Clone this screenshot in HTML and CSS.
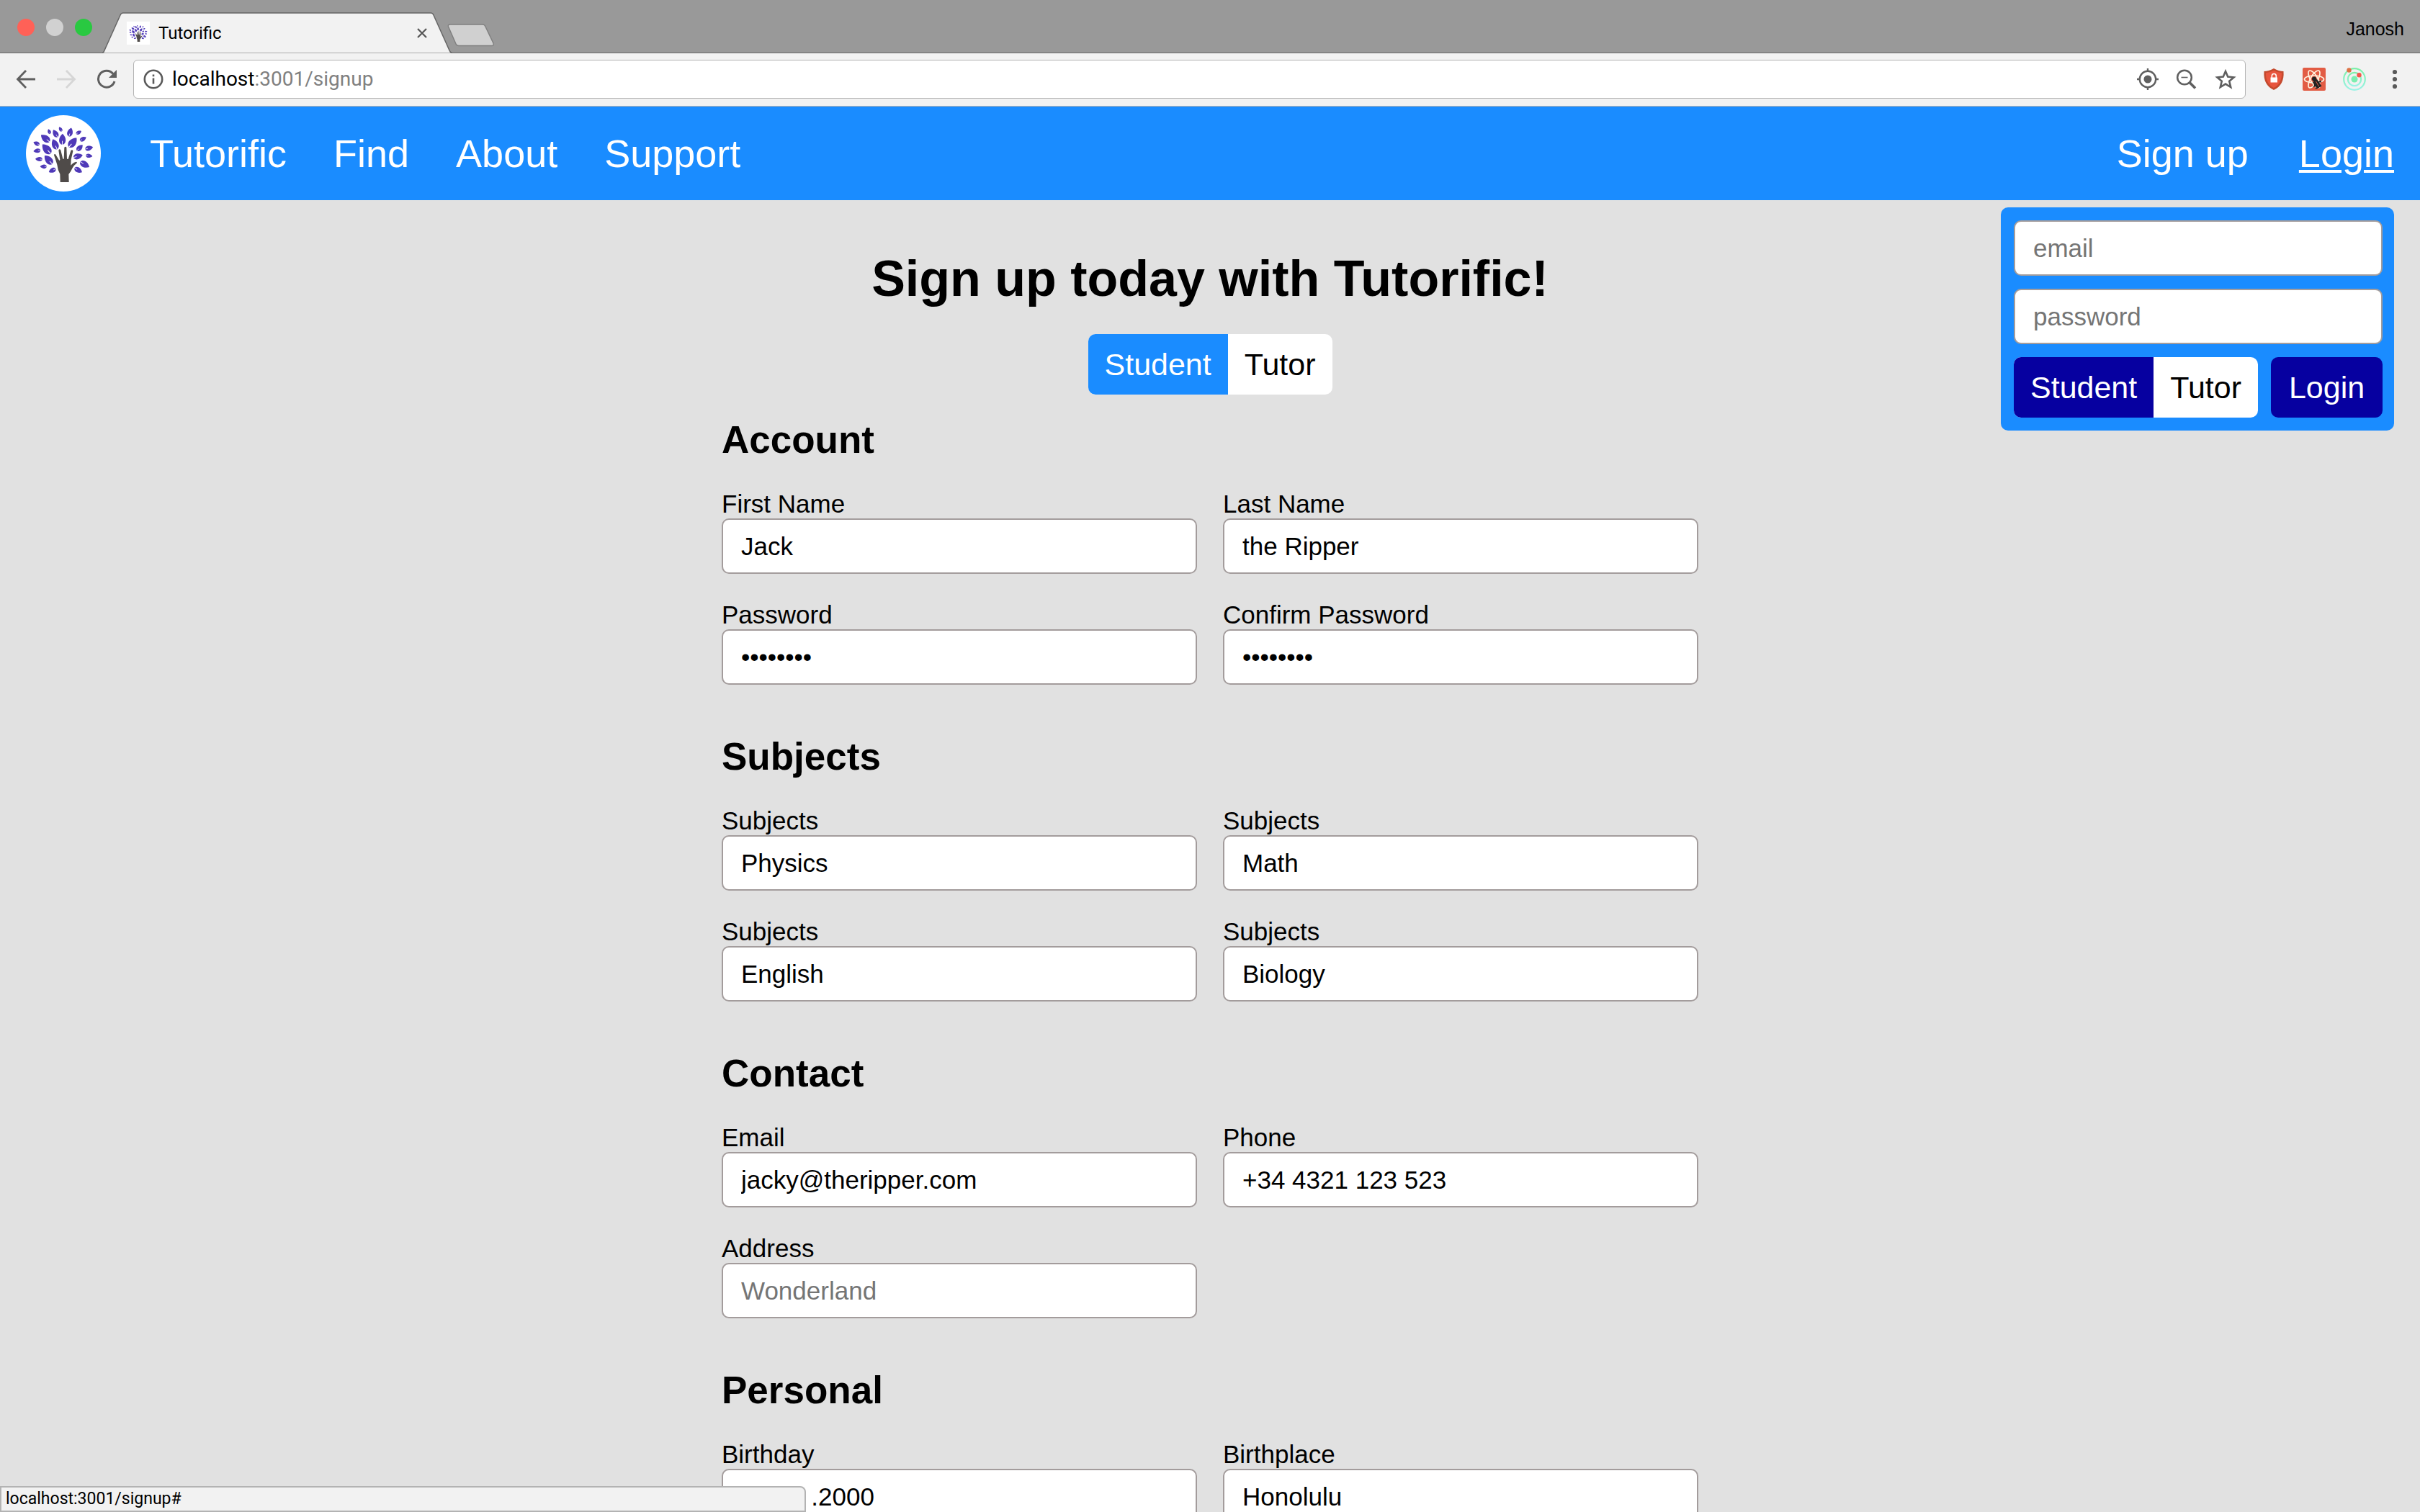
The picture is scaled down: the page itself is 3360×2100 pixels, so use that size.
FILE: index.html
```html
<!DOCTYPE html>
<html lang="en">
<head>
<meta charset="utf-8">
<title>Tutorific</title>
<link rel="stylesheet" href="styles.css">
</head>
<body>
<svg class="defs" aria-hidden="true">
  <defs>
    <g id="leaf">
      <path d="M-10 0C-8-8 3-8 10 0C3 8-8 8-10 0z" fill="#4f39b8"/>
      <path d="M-10 0L-3 0" stroke="#fff" stroke-width="1.2"/>
    </g>
    <symbol id="tree" viewBox="49 30 310 318">
      <use href="#leaf" transform="translate(192 88) rotate(240) scale(1.1)"/>
      <use href="#leaf" transform="translate(145 98) rotate(250) scale(1.1)"/>
      <use href="#leaf" transform="translate(171 106) rotate(240) scale(1.8)"/>
      <use href="#leaf" transform="translate(232 101) rotate(-75) scale(1.9)"/>
      <use href="#leaf" transform="translate(268 102) rotate(-30) scale(1.25)"/>
      <use href="#leaf" transform="translate(129 127) rotate(218) scale(2.3)"/>
      <use href="#leaf" transform="translate(200 130) rotate(-88) scale(2.3)"/>
      <use href="#leaf" transform="translate(169 151) rotate(248) scale(2.3)"/>
      <use href="#leaf" transform="translate(243 144) rotate(-50) scale(2.5)"/>
      <use href="#leaf" transform="translate(286 129) rotate(-30) scale(1.5)"/>
      <use href="#leaf" transform="translate(92 148) rotate(205) scale(1.4)"/>
      <use href="#leaf" transform="translate(134 171) rotate(228) scale(2.6)"/>
      <use href="#leaf" transform="translate(272 166) rotate(-45) scale(1.7)"/>
      <use href="#leaf" transform="translate(311 167) rotate(-15) scale(1.7)"/>
      <use href="#leaf" transform="translate(94 178) rotate(172) scale(1.5)"/>
      <use href="#leaf" transform="translate(142 216) rotate(228) scale(2.4)"/>
      <use href="#leaf" transform="translate(265 201) rotate(-15) scale(2)"/>
      <use href="#leaf" transform="translate(311 199) rotate(8) scale(1.4)"/>
      <use href="#leaf" transform="translate(102 213) rotate(183) scale(1.5)"/>
      <use href="#leaf" transform="translate(293 235) rotate(30) scale(2.2)"/>
      <use href="#leaf" transform="translate(121 244) rotate(180) scale(1.4)"/>
      <use href="#leaf" transform="translate(158 260) rotate(155) scale(1.6)"/>
      <use href="#leaf" transform="translate(266 259) rotate(30) scale(1.8)"/>
      <path fill="#4f4b49" d="M191 309L190 275Q180 258 178 236L165 196Q166 190 171 193L187 219L190 216L184 176Q188 168 193 176L202 212L206 212L208 164Q213 158 217 164L219 212L224 213L235 178Q241 171 244 179L236 215L235 239Q246 226 258 224Q264 227 259 230Q248 238 242 250Q234 268 226 276L227 309z"/>
    </symbol>
  </defs>
</svg>

<header class="browser">
  <div class="tabstrip">
    <div class="lights"><span class="light red"></span><span class="light gray"></span><span class="light green"></span></div>
    <div class="tab">
      <svg class="tab-shape" viewBox="0 0 486 57" aria-hidden="true"><path d="M0 56.500Q2 56 3 53L25 4Q26 1 29 1H456Q459 1 460 4L482 53Q483 56 486 56.500" fill="#f2f2f2" stroke="#666" stroke-width="1.500"/></svg>
      <svg class="favicon" aria-hidden="true"><use href="#tree"/></svg>
      <span class="tab-title">Tutorific</span>
      <button class="tab-close" aria-label="Close tab"><svg width="14" height="14" viewBox="0 0 14 14"><path d="M1 1L13 13M13 1L1 13" stroke="#555" stroke-width="2.200"/></svg></button>
    </div>
    <button class="new-tab" aria-label="New tab"><svg width="66" height="32" viewBox="0 0 66 32"><path d="M4 1H49Q52 1 53 4L64 27Q65 30.500 62 30.500H16Q13 30.500 12 28L1.500 4Q0.500 1 4 1z" fill="#d0d0d0" stroke="#808080" stroke-width="1.500"/></svg></button>
    <span class="profile">Janosh</span>
  </div>
  <div class="toolbar">
    <div class="history">
      <button aria-label="Back"><svg width="28" height="28" viewBox="0 0 28 28"><path d="M14 2L2.500 14L14 26M3 14H27" fill="none" stroke="#5f5f5f" stroke-width="2.800"/></svg></button>
      <button aria-label="Forward"><svg width="28" height="28" viewBox="0 0 28 28"><path d="M14 2L25.500 14L14 26M25 14H1" fill="none" stroke="#d6d6d6" stroke-width="2.800"/></svg></button>
      <button aria-label="Reload"><svg width="28" height="28" viewBox="0 0 28 28"><path d="M25 17A11.500 11.500 0 1 1 23 6.500" fill="none" stroke="#5f5f5f" stroke-width="3"/><path d="M28 1V12H17z" fill="#5f5f5f"/></svg></button>
    </div>
    <div class="omnibox">
      <svg width="28" height="28" viewBox="0 0 28 28" aria-hidden="true"><circle cx="14" cy="14" r="12.200" fill="none" stroke="#5a5a5a" stroke-width="2.600"/><path d="M14 12.500V20.500M14 7.500V10.300" stroke="#5a5a5a" stroke-width="2.600"/></svg>
      <span class="url"><b>localhost</b>:3001/signup</span>
      <div class="omni-icons">
        <svg width="32" height="32" viewBox="0 0 32 32" aria-hidden="true"><g stroke="#5f5f5f" stroke-width="2.400" fill="none"><circle cx="16" cy="16" r="11.200"/><path d="M16 1V6M16 26V31M1 16H6M26 16H31"/></g><circle cx="16" cy="16" r="5.500" fill="#5f5f5f"/></svg>
        <svg width="32" height="32" viewBox="0 0 32 32" aria-hidden="true"><g stroke="#5f5f5f" fill="none"><circle cx="13" cy="13.500" r="9.800" stroke-width="2.500"/><path d="M8.500 13.500H17.500" stroke-width="1.600"/><path d="M20 20.500L28 28.500" stroke-width="3.600"/></g></svg>
        <svg width="32" height="32" viewBox="0 0 32 32" aria-hidden="true"><path d="M16 5L19.200 12.600L27.500 13.400L21.200 18.800L23.200 27L16 22.600L8.800 27L10.800 18.800L4.500 13.400L12.800 12.600z" fill="none" stroke="#5f5f5f" stroke-width="2.600"/></svg>
      </div>
    </div>
    <div class="extensions">
      <svg width="32" height="32" viewBox="0 0 32 32" aria-hidden="true"><path d="M16 1Q23 5 29.500 5Q31 24 16 31Q1 24 2.500 5Q9 5 16 1z" fill="#c44a2e"/><path d="M16 4Q22 7 27 7.200Q27.500 22 16 28Q4.500 22 5 7.200Q10 7 16 4z" fill="#e8553e"/><rect x="11.500" y="13.500" width="9.500" height="7" fill="#fff"/><path d="M13.300 14V11.500a3 3 0 0 1 6 0V14" fill="none" stroke="#fff" stroke-width="1.600"/></svg>
      <svg width="32" height="32" viewBox="0 0 32 32" aria-hidden="true"><rect width="32" height="32" rx="2" fill="#e25c44"/><g fill="none" stroke="#fff3e0" stroke-width="1.700"><ellipse cx="16" cy="16" rx="13.500" ry="5"/><ellipse cx="16" cy="16" rx="13.500" ry="5" transform="rotate(60 16 16)"/><ellipse cx="16" cy="16" rx="13.500" ry="5" transform="rotate(120 16 16)"/></g><circle cx="16" cy="15.500" r="3" fill="#222"/><path d="M15 18L20 16L26 25L21 29L16 25z" fill="#222"/><path d="M14 21L26 19.500M15 27L25 18M18 29L26 25" stroke="#222" stroke-width="1.400"/><path d="M18.500 19L22.500 26" stroke="#e25c44" stroke-width="1"/></svg>
      <svg width="32" height="32" viewBox="0 0 32 32" aria-hidden="true"><defs><linearGradient id="ring" x1="0" y1="0" x2="0" y2="1"><stop offset="0" stop-color="#7df0a8"/><stop offset="1" stop-color="#9af3e6"/></linearGradient></defs><g fill="none" stroke="url(#ring)" stroke-width="2.200"><circle cx="16" cy="16" r="14.800"/><circle cx="16" cy="16" r="9.200"/></g><circle cx="16" cy="16" r="4.500" fill="#7ceeb0"/><circle cx="8.500" cy="3.500" r="3.200" fill="#dd7346"/><circle cx="22.500" cy="10.200" r="3.200" fill="#f5564a"/></svg>
      <svg width="32" height="32" viewBox="0 0 32 32" aria-hidden="true"><g fill="#5a5a5a"><circle cx="16" cy="6" r="3.100"/><circle cx="16" cy="16" r="3.100"/><circle cx="16" cy="26" r="3.100"/></g></svg>
    </div>
  </div>
</header>

<nav class="nav">
  <a class="logo" href="#" aria-label="Tutorific home"><svg viewBox="0 0 104 106"><ellipse cx="52" cy="53" rx="52" ry="53" fill="#fff"/><use href="#tree" width="104" height="106"/></svg></a>
  <div class="nav-links">
    <a href="#">Tutorific</a>
    <a href="#">Find</a>
    <a href="#">About</a>
    <a href="#">Support</a>
  </div>
  <div class="nav-account">
    <a href="#">Sign up</a>
    <a class="current" href="#">Login</a>
  </div>
  <form class="login">
    <input type="email" placeholder="email" aria-label="email">
    <input type="password" placeholder="password" aria-label="password">
    <div class="login-row">
      <div class="toggle dark"><button type="button" class="on">Student</button><button type="button">Tutor</button></div>
      <button class="submit" type="button">Login</button>
    </div>
  </form>
</nav>

<main class="page">
  <h1>Sign up today with Tutorific!</h1>
  <div class="toggle"><button type="button" class="on">Student</button><button type="button">Tutor</button></div>
  <form class="signup">
    <section>
      <h2>Account</h2>
      <div class="fields">
        <label>First Name<input type="text" value="Jack"></label>
        <label>Last Name<input type="text" value="the Ripper"></label>
        <label>Password<input type="password" value="password"></label>
        <label>Confirm Password<input type="password" value="password"></label>
      </div>
    </section>
    <section>
      <h2>Subjects</h2>
      <div class="fields">
        <label>Subjects<input type="text" value="Physics"></label>
        <label>Subjects<input type="text" value="Math"></label>
        <label>Subjects<input type="text" value="English"></label>
        <label>Subjects<input type="text" value="Biology"></label>
      </div>
    </section>
    <section>
      <h2>Contact</h2>
      <div class="fields">
        <label>Email<input type="email" value="jacky@theripper.com"></label>
        <label>Phone<input type="tel" value="+34 4321 123 523"></label>
        <label>Address<input type="text" placeholder="Wonderland"></label>
      </div>
    </section>
    <section>
      <h2>Personal</h2>
      <div class="fields">
        <label>Birthday<input type="text" value="01.01&nbsp;.2000"></label>
        <label>Birthplace<input type="text" value="Honolulu"></label>
      </div>
    </section>
  </form>
</main>

<div class="status">localhost:3001/signup#</div>
</body>
</html>
```
FILE: styles.css
```css
* { box-sizing: border-box; }

body {
  margin: 0;
  height: 100vh;
  overflow: hidden;
  background: #e1e1e1;
  color: #000;
  font: 35px/40px "Liberation Sans", Arial, sans-serif;
}

button {
  margin: 0;
  padding: 0;
  border: 0;
  background: none;
  font: inherit;
  color: inherit;
}

svg { display: block; flex: none; }
.defs { position: absolute; width: 0; height: 0; }

/* Browser window */
.tabstrip {
  display: flex;
  align-items: flex-end;
  height: 74px;
  padding: 0 22px 0 24px;
  background: #999;
  box-shadow: inset 0 -1px #666;
}
.lights { display: flex; gap: 16px; padding-bottom: 24px; }
.light { width: 24px; height: 24px; border-radius: 50%; }
.red { background: #ff6157; }
.gray { background: #d1d1d1; }
.green { background: #29c941; }

.tab {
  position: relative;
  display: flex;
  align-items: center;
  width: 486px;
  height: 57px;
  margin-left: 14px;
  padding: 0 35px 0 34px;
  font: 24px/28px Roboto, sans-serif;
}
.tab-shape { position: absolute; inset: 0; width: 486px; height: 57px; }
.favicon { position: relative; width: 32px; height: 32px; background: #fff; }
.tab-title { position: relative; flex: 1; margin-left: 12px; }
.tab-close { position: relative; }
.new-tab { margin-left: -7px; padding-bottom: 9px; }
.profile { margin-left: auto; padding-bottom: 20px; font-size: 25px; line-height: 28px; }

.toolbar {
  display: flex;
  align-items: center;
  gap: 23px;
  height: 74px;
  padding: 0 19px 1px 22px;
  background: #f2f2f2;
  border-bottom: 1px solid #b3b3b3;
}
.history { display: flex; gap: 28px; }
.omnibox {
  flex: 1;
  display: flex;
  align-items: center;
  gap: 12px;
  height: 54px;
  padding: 0 11px 0 13px;
  border: 1px solid #b3b3b3;
  border-radius: 6px;
  background: #fff;
}
.url { font: 28px/32px Roboto, sans-serif; color: #808080; }
.url b { font-weight: 400; color: #000; }
.omni-icons { display: flex; gap: 22px; margin-left: auto; }
.extensions { display: flex; gap: 24px; }

/* Site navigation */
.nav {
  position: relative;
  display: flex;
  align-items: center;
  gap: 68px;
  height: 130px;
  padding: 0 36px;
  background: #1a8cff;
  color: #fff;
  font-size: 54px;
  line-height: 62px;
}
.nav a { color: inherit; text-decoration: none; }
.nav .current {
  text-decoration: underline;
  text-decoration-thickness: 4px;
  text-underline-offset: 4px;
}
.logo svg { width: 104px; height: 106px; }
.nav-links { display: flex; gap: 65px; }
.nav-account { display: flex; gap: 70px; margin-left: auto; }

.login {
  position: absolute;
  top: 140px;
  right: 36px;
  display: flex;
  flex-direction: column;
  gap: 18px;
  width: 546px;
  padding: 18px 16px 18px 18px;
  border-radius: 10px;
  background: #1a8cff;
}
.login-row { display: flex; gap: 18px; }
.submit {
  flex: 1;
  border-radius: 10px;
  background: #0600a0;
  font-size: 43px;
}

input {
  display: block;
  width: 100%;
  height: 77px;
  margin: 0;
  padding: 0 25px;
  border: 2px solid #a39c9c;
  border-radius: 10px;
  background: #fff;
  color: #000;
  font: 35px/40px "Liberation Sans", Arial, sans-serif;
}
input::placeholder { color: #757575; opacity: 1; }

.toggle {
  display: flex;
  overflow: hidden;
  width: max-content;
  border-radius: 10px;
  background: #fff;
  color: #000;
}
.toggle button {
  height: 84px;
  padding: 0 23px;
  font-size: 43px;
  line-height: 50px;
}
.toggle .on { background: #1a8cff; color: #fff; }
.toggle.dark .on { background: #0600a0; }

/* Sign-up page */
.page {
  display: flex;
  flex-direction: column;
  align-items: center;
  padding-top: 68px;
}
h1 { margin: 0 0 36px; font-size: 70px; line-height: 82px; }
.signup {
  display: flex;
  flex-direction: column;
  gap: 69px;
  width: 1356px;
  max-width: 100%;
  margin-top: 32px;
}
h2 { margin: 0 0 38px; font-size: 53px; line-height: 62px; }
.fields {
  display: grid;
  grid-template-columns: 1fr 1fr;
  gap: 37px 36px;
}

.status {
  position: fixed;
  left: 0;
  bottom: 0;
  width: 1119px;
  height: 36px;
  padding-left: 6px;
  border: 2px solid #b3b3b3;
  border-radius: 0 8px 0 0;
  background: #f2f2f2;
  font: 23px/32px Roboto, sans-serif;
}
```
